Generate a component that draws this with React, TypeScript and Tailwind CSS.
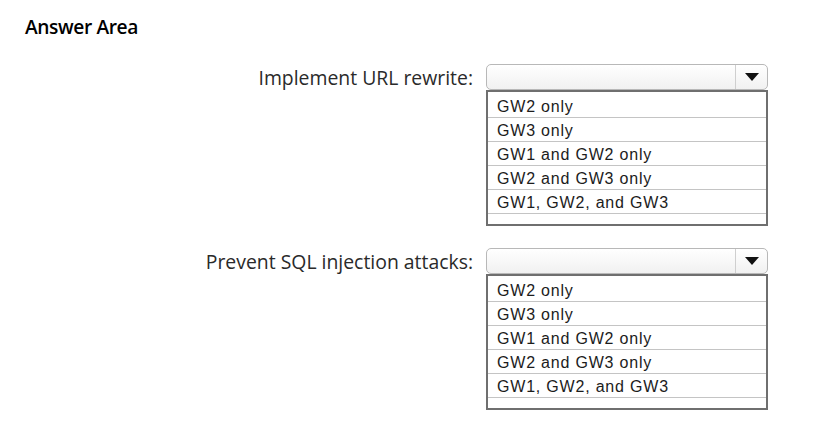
const OPTIONS = [
  "GW2 only",
  "GW3 only",
  "GW1 and GW2 only",
  "GW2 and GW3 only",
  "GW1, GW2, and GW3",
];

function Dropdown() {
  return (
    <div className="w-[282px]">
      <div className="flex h-[26px] rounded-[5px] border border-[#b8b8b8] bg-gradient-to-b from-white to-[#f1f1f1]">
        <div className="flex-1" />
        <div className="flex w-[32px] items-center justify-center border-l border-[#cfcfcf]">
          <svg width="14" height="8" viewBox="0 0 14 8">
            <path d="M0 0 L14 0 L7 8 Z" fill="#111" />
          </svg>
        </div>
      </div>
      <div className="border-2 border-[#6f6f6f] bg-white">
        {OPTIONS.map((opt, i) => (
          <div
            key={opt}
            className={`${i === 0 ? "h-[26px] pt-[4px]" : "h-[24px] pt-[2px]"} border-b border-[#c4c4c4] pl-[9px] text-[16px] leading-[22px] tracking-[0.8px] text-[#1c1c1c]`}
            style={{ fontFamily: '"Liberation Sans", Arial, sans-serif' }}
          >
            {opt}
          </div>
        ))}
        <div className="h-[10px]" />
      </div>
    </div>
  );
}

function Question({ label }: { label: string }) {
  return (
    <div className="flex items-start">
      <div className="flex h-[28px] w-[486px] items-center justify-end pr-[13px] text-[19.4px] text-[#2a2a2a]">
        {label}
      </div>
      <Dropdown />
    </div>
  );
}

export default function App() {
  return (
    <div
      className="h-[435px] w-[836px] bg-white"
      style={{ fontFamily: '"Open Sans", "Noto Sans", sans-serif' }}
    >
      <div className="px-[25px] pt-[13px] text-[19.2px] font-semibold tracking-[-0.4px] text-black">
        Answer Area
      </div>
      <div className="mt-[22px] flex flex-col gap-[22px]">
        <Question label="Implement URL rewrite:" />
        <Question label="Prevent SQL injection attacks:" />
      </div>
    </div>
  );
}
